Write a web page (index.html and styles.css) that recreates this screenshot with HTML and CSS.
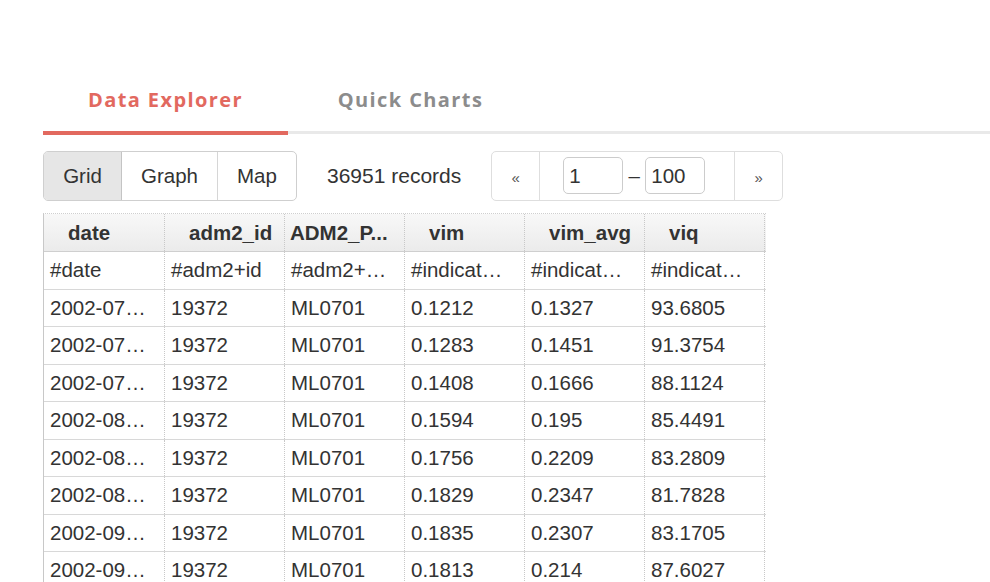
FILE: index.html
```html
<!DOCTYPE html>
<html>
<head>
<meta charset="utf-8">
<link rel="stylesheet" href="styles.css">
</head>
<body>
<div class="tabs">
  <div class="tab active">Data Explorer</div>
  <div class="tab">Quick Charts</div>
</div>
<div class="toolbar">
  <div class="btn-group">
    <div class="btn selected b-grid">Grid</div>
    <div class="btn b-graph">Graph</div>
    <div class="btn b-map">Map</div>
  </div>
  <div class="records">36951 records</div>
  <div class="pager">
    <div class="pg-arrow">&laquo;</div>
    <div class="pg-mid">
      <div class="pg-input">1</div>
      <div class="pg-dash">&ndash;</div>
      <div class="pg-input">100</div>
    </div>
    <div class="pg-arrow">&raquo;</div>
  </div>
</div>
<div class="grid">
  <div class="row head">
    <div class="cell h">date</div>
    <div class="cell h">adm2_id</div>
    <div class="cell h trunc">ADM2_P...</div>
    <div class="cell h">vim</div>
    <div class="cell h">vim_avg</div>
    <div class="cell h">viq</div>
  </div>
  <div class="row">
    <div class="cell">#date</div><div class="cell">#adm2+id</div><div class="cell">#adm2+…</div><div class="cell">#indicat…</div><div class="cell">#indicat…</div><div class="cell">#indicat…</div>
  </div>
  <div class="row">
    <div class="cell">2002-07…</div><div class="cell">19372</div><div class="cell">ML0701</div><div class="cell">0.1212</div><div class="cell">0.1327</div><div class="cell">93.6805</div>
  </div>
  <div class="row">
    <div class="cell">2002-07…</div><div class="cell">19372</div><div class="cell">ML0701</div><div class="cell">0.1283</div><div class="cell">0.1451</div><div class="cell">91.3754</div>
  </div>
  <div class="row">
    <div class="cell">2002-07…</div><div class="cell">19372</div><div class="cell">ML0701</div><div class="cell">0.1408</div><div class="cell">0.1666</div><div class="cell">88.1124</div>
  </div>
  <div class="row">
    <div class="cell">2002-08…</div><div class="cell">19372</div><div class="cell">ML0701</div><div class="cell">0.1594</div><div class="cell">0.195</div><div class="cell">85.4491</div>
  </div>
  <div class="row">
    <div class="cell">2002-08…</div><div class="cell">19372</div><div class="cell">ML0701</div><div class="cell">0.1756</div><div class="cell">0.2209</div><div class="cell">83.2809</div>
  </div>
  <div class="row">
    <div class="cell">2002-08…</div><div class="cell">19372</div><div class="cell">ML0701</div><div class="cell">0.1829</div><div class="cell">0.2347</div><div class="cell">81.7828</div>
  </div>
  <div class="row">
    <div class="cell">2002-09…</div><div class="cell">19372</div><div class="cell">ML0701</div><div class="cell">0.1835</div><div class="cell">0.2307</div><div class="cell">83.1705</div>
  </div>
  <div class="row">
    <div class="cell">2002-09…</div><div class="cell">19372</div><div class="cell">ML0701</div><div class="cell">0.1813</div><div class="cell">0.214</div><div class="cell">87.6027</div>
  </div>
</div>
</body>
</html>
```
FILE: styles.css
```css
html, body {
  margin: 0;
  padding: 0;
  background: #fff;
  overflow: hidden;
}
body {
  font-family: "Liberation Sans", Arial, sans-serif;
  color: #333;
  font-size: 20.5px;
}
.tabs {
  margin: 88px 0 0 43px;
  display: flex;
  border-bottom: 3px solid #e9e9e9;
}
.tab {
  width: 245px;
  text-align: center;
  font-family: "Open Sans", sans-serif;
  font-weight: 700;
  font-size: 20px;
  letter-spacing: 1.4px;
  line-height: 24px;
  padding-bottom: 19px;
  color: #8c8c8c;
}
.tab.active {
  color: #e2695f;
  border-bottom: 4px solid #e2695f;
  margin-bottom: -4px;
}
.toolbar {
  margin: 17px 0 0 43px;
  display: flex;
  align-items: center;
  gap: 30px;
  height: 50px;
}
.btn-group {
  display: flex;
  height: 50px;
  box-sizing: border-box;
  border: 1px solid #cfcfcf;
  border-radius: 5px;
  overflow: hidden;
}
.btn {
  display: flex;
  align-items: center;
  justify-content: center;
  box-sizing: border-box;
  border-left: 1px solid #d6d6d6;
}
.b-grid {
  width: 78px;
  border-left: none;
}
.b-graph {
  width: 95px;
}
.b-map {
  width: 79px;
}
.btn.selected {
  background: #e6e6e6;
  border-right: 1px solid #c4c4c4;
}
.btn.selected + .btn {
  border-left: none;
}
.records {
  line-height: 50px;
  font-size: 21px;
}
.pager {
  display: flex;
  height: 50px;
  box-sizing: border-box;
  border: 1px solid #dedede;
  border-radius: 5px;
}
.pg-arrow {
  width: 47px;
  display: flex;
  align-items: center;
  justify-content: center;
  font-size: 15px;
  color: #555;
  padding-top: 2px;
  box-sizing: border-box;
}
.pg-mid {
  width: 196px;
  display: flex;
  align-items: center;
  padding-left: 23px;
  box-sizing: border-box;
  border-left: 1px solid #dedede;
  border-right: 1px solid #dedede;
}
.pg-input {
  width: 60px;
  height: 37px;
  box-sizing: border-box;
  border: 1px solid #cccccc;
  border-radius: 5px;
  padding: 0 5px;
  line-height: 35px;
  font-size: 20.5px;
  color: #333;
  margin-top: -1px;
}
.pg-dash {
  width: 22px;
  text-align: center;
}
.grid {
  margin: 12px 0 0 43px;
  width: 722px;
  border-left: 1px solid #c8c8c8;
  border-top: 1px dotted #cfcfcf;
}
.row {
  display: flex;
  height: 37.5px;
  border-bottom: 1px solid #d8d8d8;
  box-sizing: border-box;
}
.row.head {
  height: 38px;
  background: linear-gradient(#f8f8f8, #ebebeb);
  border-bottom: 1px solid #cfcfcf;
}
.cell {
  width: 120px;
  box-sizing: border-box;
  border-right: 1px dotted #c8c8c8;
  padding-left: 6px;
  display: flex;
  align-items: center;
  white-space: nowrap;
  overflow: hidden;
}
.cell:first-child {
  width: 121px;
}
.cell.h {
  font-weight: 700;
  padding-left: 24px;
}
.cell.h.trunc {
  padding-left: 5px;
}
```
